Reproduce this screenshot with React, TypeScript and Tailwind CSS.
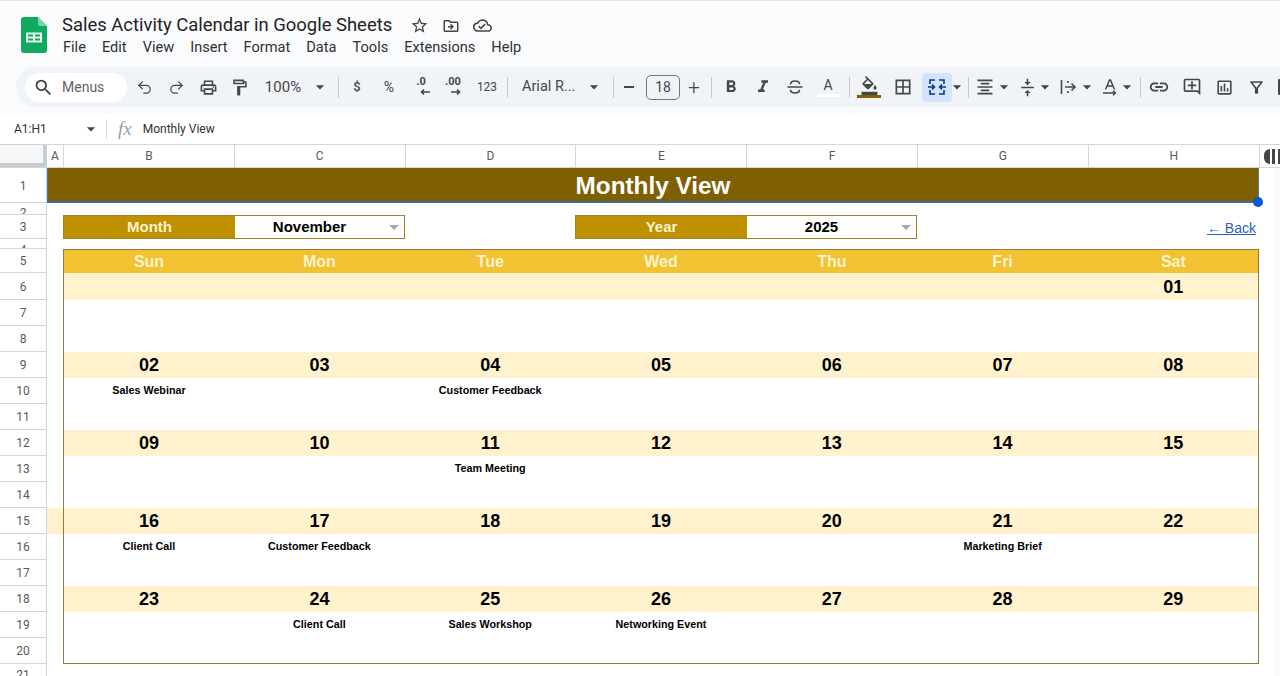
import type { ReactNode } from "react";
import { Redo2, Undo2 } from "lucide-react";
import {
  MdArrowDropDown,
  MdBorderAll,
  MdFormatAlignCenter,
  MdFormatBold,
  MdFormatColorFill,
  MdFormatItalic,
  MdLink,
  MdOutlineAddComment,
  MdOutlineAssessment,
  MdOutlineCloudDone,
  MdOutlineDriveFileMove,
  MdOutlineFilterAlt,
  MdOutlineFormatPaint,
  MdOutlinePrint,
  MdSearch,
  MdStarBorder,
  MdVerticalAlignCenter,
} from "react-icons/md";

const menus = ["File", "Edit", "View", "Insert", "Format", "Data", "Tools", "Extensions", "Help"];
const columns = ["B", "C", "D", "E", "F", "G", "H"];
const days = ["Sun", "Mon", "Tue", "Wed", "Thu", "Fri", "Sat"];

const weeks = [
  { dates: ["", "", "", "", "", "", "01"], events: ["", "", "", "", "", "", ""] },
  { dates: ["02", "03", "04", "05", "06", "07", "08"], events: ["Sales Webinar", "", "Customer Feedback", "", "", "", ""] },
  { dates: ["09", "10", "11", "12", "13", "14", "15"], events: ["", "", "Team Meeting", "", "", "", ""] },
  { dates: ["16", "17", "18", "19", "20", "21", "22"], events: ["Client Call", "Customer Feedback", "", "", "", "Marketing Brief", ""] },
  { dates: ["23", "24", "25", "26", "27", "28", "29"], events: ["", "Client Call", "Sales Workshop", "Networking Event", "", "", ""] },
];

// rows 2, 4 and 21 are too short for their number, it gets clipped like in Sheets
const rowHeaders = [
  { n: "1", cls: "h-[35px] items-center pt-[1px]" },
  { n: "2", cls: "h-[12px] items-start pt-[1px]" },
  { n: "3", cls: "h-[24px] items-center pt-[1px]" },
  { n: "4", cls: "h-[10px] items-start pt-[2px]" },
  { n: "5", cls: "h-[24px] items-center pt-[1px]" },
  { n: "6", cls: "h-[27px] items-center pt-[1px]" },
  ...Array.from({ length: 14 }, (_, i) => ({ n: String(i + 7), cls: "h-[26px] items-center pt-[1px]" })),
  { n: "21", cls: "h-[26px] items-start pt-[2px]" },
];

const Slot = ({ w, children }: { w: string; children?: ReactNode }) => (
  <div className={`flex h-full shrink-0 items-center justify-center whitespace-nowrap ${w}`}>{children}</div>
);

const Caret = () => <MdArrowDropDown className="shrink-0 text-[#444746]" size={20} />;
const Divider = () => <div className="h-[21px] w-px shrink-0 bg-[#c7c7c7]" />;

const SheetsLogo = () => (
  <svg width="26" height="36" viewBox="0 0 26 36" className="mt-[2px] shrink-0" aria-hidden="true">
    <path d="M3 0h14l9 9v24a3 3 0 0 1-3 3H3a3 3 0 0 1-3-3V3a3 3 0 0 1 3-3z" fill="#11a861" />
    <path d="M17 0l9 9h-7a2 2 0 0 1-2-2z" fill="#7fd3a8" />
    <path d="M5 15.5h16v10H5z" fill="#e8f6ee" />
    <path d="M7 17.5h5v2H7zM14 17.5h5v2h-5zM7 21.5h5v2H7zM14 21.5h5v2h-5z" fill="#11a861" />
  </svg>
);

const DecimalIcon = ({ label, dir }: { label: string; dir: "left" | "right" }) => (
  <div className="flex h-[24px] w-[24px] shrink-0 flex-col items-center text-[#444746]">
    <span className="h-[13px] text-[11px] leading-[13px] font-bold">{label}</span>
    <svg width="12" height="8" viewBox="0 0 12 8" className={dir === "left" ? "ml-[8px]" : "ml-[6px]"}>
      {dir === "left" ? (
        <path d="M11 4H3M5 1.5 2.5 4 5 6.5" fill="none" stroke="currentColor" strokeWidth="1.6" />
      ) : (
        <path d="M1 4h8M7 1.5 9.5 4 7 6.5" fill="none" stroke="currentColor" strokeWidth="1.6" />
      )}
    </svg>
  </div>
);

const StrikeIcon = () => (
  <svg width="20" height="20" viewBox="0 0 20 20" fill="none" stroke="#444746" strokeWidth="1.6">
    <path d="M2.5 10h15M5.5 7.5C5.5 4.8 7.6 4 10 4s4.5.9 4.5 3.2M5.5 12.8C5.5 15.2 7.6 16 10 16s4.5-.8 4.5-3.2" />
  </svg>
);

const MergeIcon = () => (
  <svg width="20" height="20" viewBox="0 0 20 20" fill="none" stroke="#0b3a80" strokeWidth="1.6">
    <path d="M8 3H3v4M3 13v4h5M12 3h5v4M17 13v4h-5" />
    <path d="M1 10h6M5 7.6 7.4 10 5 12.4M19 10h-6M15 7.6 12.6 10l2.4 2.4" />
  </svg>
);

const WrapIcon = () => (
  <svg width="20" height="20" viewBox="0 0 20 20" fill="none" stroke="#444746" strokeWidth="1.6">
    <path d="M3.5 3v14M7 10h10M13.5 6.5 17 10l-3.5 3.5M10 4v2M10 14v2" />
  </svg>
);

const TextRotateIcon = () => (
  <svg width="20" height="20" viewBox="0 0 20 20" fill="none" stroke="#444746" strokeWidth="1.5">
    <path d="M5.5 12.5 9.5 3h1l4 9.5M7 9h6" />
    <path d="M3 16h12M13 13.8l2.4 2.2L13 18.2" />
  </svg>
);

const Toolbar = () => (
  <div className="ml-4 flex h-[40px] items-center rounded-l-[20px] bg-[#f0f4f9] pl-[9px] text-[#444746]">
    <div className="flex h-[29px] w-[102px] shrink-0 items-center rounded-full bg-white pl-[8px]">
      <MdSearch size={21} className="text-[#3c4043]" />
      <span className="ml-[8px] text-[14px] text-[#5f6368]">Menus</span>
    </div>
    <div className="w-px shrink-0" />
    <Slot w="w-[32px]"><Undo2 size={17} strokeWidth={1.8} /></Slot>
    <Slot w="w-[32px]"><Redo2 size={17} strokeWidth={1.8} /></Slot>
    <Slot w="w-[32px]"><MdOutlinePrint size={19} /></Slot>
    <Slot w="w-[30px]"><MdOutlineFormatPaint size={19} /></Slot>
    <Slot w="w-[58px]"><span className="text-[15px]">100%</span></Slot>
    <Slot w="w-[16px]"><Caret /></Slot>
    <Slot w="w-[20px]"><Divider /></Slot>
    <Slot w="w-[18px]"><span className="text-[13px] font-medium">$</span></Slot>
    <div className="w-[7px] shrink-0" />
    <Slot w="w-[32px]"><span className="text-[14px]">%</span></Slot>
    <Slot w="w-[32px]"><DecimalIcon label=".0" dir="left" /></Slot>
    <Slot w="w-[32px]"><DecimalIcon label=".00" dir="right" /></Slot>
    <Slot w="w-[36px]"><span className="text-[12px]">123</span></Slot>
    <Slot w="w-[4px]"><Divider /></Slot>
    <div className="flex h-full w-[77px] shrink-0 items-center pl-[13px] text-[14.5px] whitespace-nowrap">Arial R...</div>
    <Slot w="w-[16px]"><Caret /></Slot>
    <Slot w="w-[22px]"><Divider /></Slot>
    <Slot w="w-[10px]"><span className="h-[2px] w-[10px] bg-[#444746]" /></Slot>
    <div className="ml-[12px] flex h-[25px] w-[34px] shrink-0 items-center justify-center rounded-[5px] border border-[#747775] text-[14px]">18</div>
    <Slot w="w-[28px]"><span className="text-[21px] leading-none font-light">+</span></Slot>
    <Slot w="w-[6px]"><Divider /></Slot>
    <Slot w="w-[33px]"><MdFormatBold size={20} /></Slot>
    <Slot w="w-[32px]"><MdFormatItalic size={20} /></Slot>
    <Slot w="w-[32px]"><StrikeIcon /></Slot>
    <Slot w="w-[34px]">
      <div className="flex w-[23px] flex-col items-center">
        <span className="h-[17px] text-[14px] leading-[17px]">A</span>
        <span className="h-[3px] w-[23px] bg-white" />
      </div>
    </Slot>
    <Slot w="w-[8px]"><Divider /></Slot>
    <Slot w="w-[32px]">
      <div className="flex w-[24px] flex-col items-center">
        <MdFormatColorFill size={19} />
        <span className="h-[3px] w-[24px] bg-[#7f6000]" />
      </div>
    </Slot>
    <Slot w="w-[36px]"><MdBorderAll size={20} /></Slot>
    <div className="ml-px flex h-[29px] w-[30px] shrink-0 items-center justify-center rounded-[4px] bg-[#d3e3fd]">
      <MergeIcon />
    </div>
    <Slot w="w-[10px]"><Caret /></Slot>
    <Slot w="w-[12px]"><Divider /></Slot>
    <Slot w="w-[22px]"><MdFormatAlignCenter size={20} /></Slot>
    <Slot w="w-[16px]"><Caret /></Slot>
    <Slot w="w-[30px]"><MdVerticalAlignCenter size={19} /></Slot>
    <Slot w="w-[6px]"><Caret /></Slot>
    <div className="ml-[8px]"><Slot w="w-[24px]"><WrapIcon /></Slot></div>
    <Slot w="w-[14px]"><Caret /></Slot>
    <div className="ml-[4px]"><Slot w="w-[24px]"><TextRotateIcon /></Slot></div>
    <Slot w="w-[10px]"><Caret /></Slot>
    <Slot w="w-[16px]"><Divider /></Slot>
    <Slot w="w-[22px]"><MdLink size={22} /></Slot>
    <Slot w="w-[44px]"><MdOutlineAddComment size={20} /></Slot>
    <Slot w="w-[20px]"><MdOutlineAssessment size={19} /></Slot>
    <Slot w="w-[44px]"><MdOutlineFilterAlt size={19} /></Slot>
    <div className="h-[16px] w-[6px] shrink-0 rounded-l-[2px] border-y-2 border-l-2 border-[#444746]" />
  </div>
);

const FilterField = ({ label, value, offset }: { label: string; value: string; offset: string }) => (
  <div className="flex h-[24px] w-[342px] border border-[#9c8520] text-[15px] font-bold">
    <div className="flex w-[171px] items-center justify-center bg-[#bf9000] text-[#fff2cc]">{label}</div>
    <div className="relative flex flex-1 items-center justify-center bg-white text-black">
      <span className={offset}>{value}</span>
      <span className="absolute top-[9px] right-[5px] h-0 w-0 border-x-[5px] border-t-[5px] border-x-transparent border-t-[#a6a6a6]" />
    </div>
  </div>
);

const Week = ({ dates, events, first, gutter }: { dates: string[]; events: string[]; first: boolean; gutter: boolean }) => (
  <div>
    <div className={`relative grid grid-cols-[170px_repeat(6,170.8px)] bg-[#fff2cc] ${first ? "h-[27px] pt-[1px]" : "h-[26px]"}`}>
      {gutter && <span className="absolute top-0 -left-[17px] h-full w-[16px] bg-[#fff2cc]" />}
      {dates.map((d, i) => (
        <div key={i} className="flex items-center justify-center text-[18px] font-bold text-black">{d}</div>
      ))}
    </div>
    <div className="grid h-[52px] grid-cols-[170px_repeat(6,170.8px)]">
      {events.map((e, i) => (
        <div key={i} className="flex h-[26px] items-center justify-center pb-[2px] text-[10.75px] font-bold whitespace-nowrap text-black">{e}</div>
      ))}
    </div>
  </div>
);

const App = () => {
  return (
    <div className="h-[676px] w-[1280px] overflow-hidden bg-white font-['Liberation_Sans',Arial,sans-serif]">
      {/* Title and menus */}
      <div className="bg-[#f9fbfd] font-['Roboto',sans-serif]">
        <div className="flex h-[67px] border-t border-[#e3e6ea] pt-[14px] pl-[21px]">
          <SheetsLogo />
          <div className="ml-[15px]">
            <div className="flex h-[21px] items-center">
              <span className="text-[18.45px] leading-[21px] whitespace-nowrap text-[#1f1f1f]">Sales Activity Calendar in Google Sheets</span>
              <MdStarBorder size={19} className="ml-[18px] text-[#444746]" />
              <MdOutlineDriveFileMove size={18} className="ml-[13px] text-[#444746]" />
              <MdOutlineCloudDone size={19} className="ml-[13px] text-[#444746]" />
            </div>
            <div className="mt-[1px] ml-px flex gap-[16px] text-[14.6px] leading-[20px] text-[#303133]">
              {menus.map((m) => (
                <span key={m}>{m}</span>
              ))}
            </div>
          </div>
        </div>
        <Toolbar />
        <div className="h-[8px]" />
      </div>

      {/* Formula bar */}
      <div className="flex h-[29px] items-center bg-white pb-[2px] font-['Roboto',sans-serif] text-[12px] text-[#303133]">
        <span className="ml-[14px] w-[67px]">A1:H1</span>
        <Caret />
        <div className="ml-[5px] h-[20px] w-px bg-[#dadce0]" />
        <span className="ml-[11px] font-['Liberation_Serif',serif] text-[19px] leading-none text-[#9aa0a6] italic">fx</span>
        <span className="ml-[11px]">Monthly View</span>
      </div>

      {/* Column headers */}
      <div className="flex h-[24px] border-y border-[#d3d6d9] bg-white font-['Roboto',sans-serif] text-[12px] text-[#575a5c]">
        <div className="w-[47px] shrink-0 border-r-4 border-b-4 border-[#c9cccf] bg-[#f6f7f8]" />
        <div className="flex w-[17px] shrink-0 items-center justify-center border-r border-[#d3d6d9]">A</div>
        {columns.map((c) => (
          <div key={c} className="flex w-[170.8px] shrink-0 items-center justify-center border-r border-[#d3d6d9]">{c}</div>
        ))}
        <div className="flex flex-1 items-center gap-[2px] pl-[4px]">
          <span className="h-[15px] w-[6px] rounded-l-full bg-[#444746]" />
          <span className="h-[15px] w-[3px] bg-[#444746]" />
          <span className="ml-[1px] h-[15px] w-[3px] bg-[#444746]" />
        </div>
      </div>

      <div className="flex">
        {/* Row headers */}
        <div className="w-[47px] shrink-0 border-r border-[#d3d6d9] font-['Roboto',sans-serif] text-[12px] text-[#575a5c]">
          {rowHeaders.map((r) => (
            <div key={r.n} className={`flex ${r.cls} justify-center overflow-hidden border-b border-[#d3d6d9]`}>{r.n}</div>
          ))}
        </div>

        <div className="w-[1212px] shrink-0">
          {/* Banner */}
          <div className="relative flex h-[35px] items-center justify-center border-x border-t border-b-2 border-x-[#3f78b5] border-t-[#7f6000] border-b-[#3d6b95] bg-[#7f6000] pt-[2px] text-[24.3px] font-bold text-white">
            Monthly View
            <span className="absolute -right-[5px] -bottom-[6px] h-[10px] w-[10px] rounded-full bg-[#0b57d0]" />
          </div>
          <div className="h-[12px]" />

          {/* Month and year pickers */}
          <div className="flex h-[24px] pl-[16px]">
            <FilterField label="Month" value="November" offset="mr-[20px]" />
            <div className="ml-[170px]">
              <FilterField label="Year" value="2025" offset="mr-[20px]" />
            </div>
            <a className="mt-[2px] ml-auto self-center pr-[3px] text-[14px] text-[#2a5fbd] underline">← Back</a>
          </div>
          <div className="h-[10px]" />

          {/* Calendar */}
          <div className="ml-[16px] h-[415px] w-[1196px] border border-[#927c3a]">
            <div className="grid h-[23px] grid-cols-[170px_repeat(6,170.8px)] bg-[#f1c232] text-[16px] font-bold text-[#fff2cc]">
              {days.map((d) => (
                <div key={d} className="flex items-center justify-center">{d}</div>
              ))}
            </div>
            {weeks.map((w, i) => (
              <Week key={i} dates={w.dates} events={w.events} first={i === 0} gutter={i === 3} />
            ))}
          </div>
        </div>

        {/* Scrollbar strip */}
        <div className="ml-auto h-[508px] w-[6px] bg-[#f8f9fa]" />
      </div>
    </div>
  );
};

export default App;
